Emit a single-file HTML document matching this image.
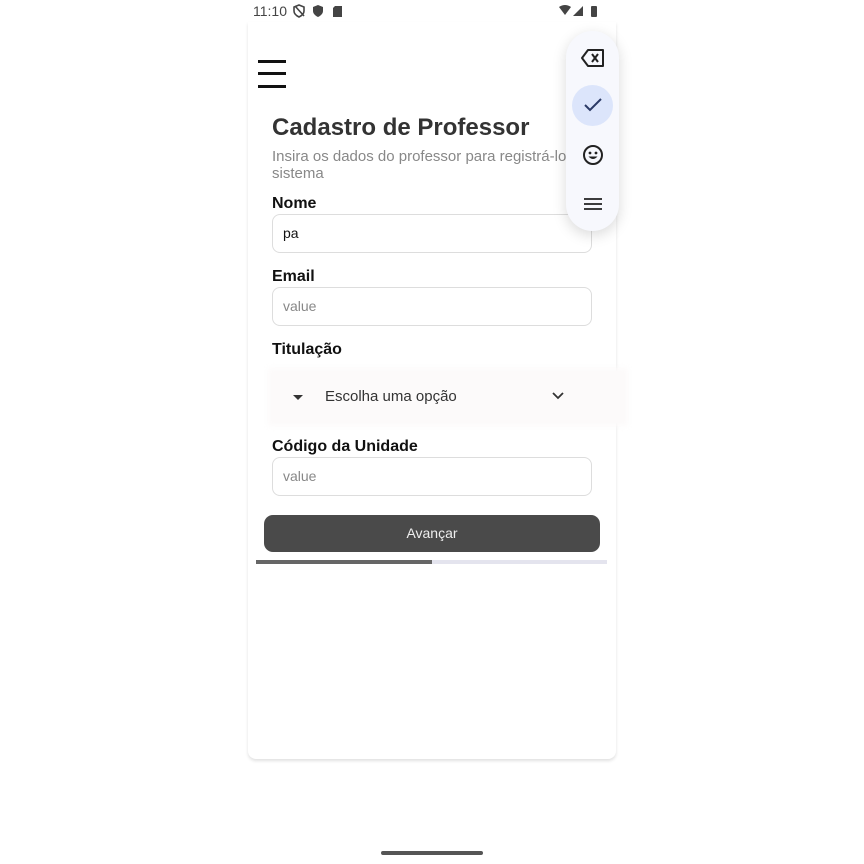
<!DOCTYPE html>
<html><head><meta charset="utf-8"><style>
*{margin:0;padding:0;box-sizing:border-box}
body{width:864px;height:864px;background:#fff;font-family:"Liberation Sans",sans-serif;position:relative;overflow:hidden}
.a{position:absolute}
.lbl{font-weight:bold;font-size:16px;color:#111;left:272px}
.inp{left:272px;width:320px;height:39px;border:1px solid #ddd;border-radius:8px;font-size:14px;padding-left:10px;line-height:37px}
</style></head><body>
<div class="a" style="left:253px;top:3px;font-size:14px;color:#444">11:10</div>
<svg class="a" style="left:293px;top:4px" width="60" height="14"><path d="M6 1 L11 3 V7 C11 10 8 12 6 13 C4 12 1 10 1 7 V3Z" fill="none" stroke="#444" stroke-width="1.6"/><path d="M2 2 L11 12" stroke="#444" stroke-width="1.6"/><path d="M25 1 L30 3 V7 C30 10 27 12 25 13 C23 12 20 10 20 7 V3Z" fill="#444"/><path d="M42 2 H49 V13 H40 V4Z" fill="#444"/></svg>
<svg class="a" style="left:558px;top:4px" width="44" height="14"><path d="M1 3 Q7 -1 13 3 L7 11Z" fill="#444"/><path d="M15 12 L25 2 V12Z" fill="#444"/><rect x="33" y="2" width="6" height="11" rx="1" fill="#444"/></svg>
<div class="a" style="left:248px;top:22px;width:368px;height:737px;box-shadow:0 2px 3px rgba(0,0,0,.12);border-radius:0 0 8px 8px"></div>
<div class="a" style="left:258px;top:60px;width:28px;height:3px;background:#111"></div>
<div class="a" style="left:258px;top:72px;width:28px;height:3px;background:#111"></div>
<div class="a" style="left:258px;top:85px;width:28px;height:3px;background:#111"></div>
<div class="a" style="left:272px;top:114px;font-size:24px;font-weight:bold;color:#333">Cadastro de Professor</div>
<div class="a" style="left:272px;top:148px;font-size:15px;color:#888;line-height:17px;width:300px;white-space:nowrap;overflow:hidden">Insira os dados do professor para registrá-lo n<br>sistema</div>
<div class="a lbl" style="top:195px">Nome</div>
<div class="a inp" style="top:214px;color:#111">pa</div>
<div class="a lbl" style="top:268px">Email</div>
<div class="a inp" style="top:287px;color:#888">value</div>
<div class="a lbl" style="top:341px">Titulação</div>
<div class="a" style="left:268px;top:368px;width:360px;height:58px;background:#fcfafa;filter:blur(3px)"></div>
<div class="a" style="left:293px;top:395px;width:0;height:0;border-left:5px solid transparent;border-right:5px solid transparent;border-top:5px solid #333"></div>
<div class="a" style="left:325px;top:388px;font-size:15px;color:#333">Escolha uma opção</div>
<svg class="a" style="left:551px;top:391px" width="14" height="10"><path d="M2 2 L7 7 L12 2" fill="none" stroke="#333" stroke-width="1.8"/></svg>
<div class="a lbl" style="top:438px">Código da Unidade</div>
<div class="a inp" style="top:457px;color:#888">value</div>
<div class="a" style="left:264px;top:515px;width:336px;height:37px;background:#4a4a4a;border-radius:9px;color:#eee;font-size:14px;text-align:center;line-height:37px">Avançar</div>
<div class="a" style="left:256px;top:560px;width:351px;height:4px;background:#e4e4ee"></div>
<div class="a" style="left:256px;top:560px;width:176px;height:4px;background:#666"></div>
<div class="a" style="left:566px;top:31px;width:53px;height:200px;background:#f7f8fd;border-radius:27px;box-shadow:0 4px 14px rgba(0,0,0,.15)"></div>
<svg class="a" style="left:580px;top:47px" width="26" height="22"><path d="M8 3 H23 V19 H8 L2 11Z" fill="none" stroke="#222" stroke-width="2" stroke-linejoin="round"/><path d="M12 7 L18 15 M18 7 L12 15" stroke="#222" stroke-width="2"/></svg>
<div class="a" style="left:572px;top:85px;width:41px;height:41px;border-radius:50%;background:#dce5fb"></div>
<svg class="a" style="left:583px;top:97px" width="20" height="16"><path d="M2 8 L7 13 L18 2" fill="none" stroke="#2b3a66" stroke-width="2"/></svg>
<svg class="a" style="left:582px;top:144px" width="22" height="22"><circle cx="11" cy="11" r="9" fill="none" stroke="#222" stroke-width="2"/><circle cx="8" cy="9" r="1.4" fill="#222"/><circle cx="14" cy="9" r="1.4" fill="#222"/><path d="M6.5 12.5 Q11 17.5 15.5 12.5Z" fill="#222"/></svg>
<svg class="a" style="left:583px;top:197px" width="20" height="14"><path d="M1 2 H19 M1 7 H19 M1 12 H19" stroke="#222" stroke-width="1.8"/></svg>
<div class="a" style="left:381px;top:851px;width:102px;height:4px;border-radius:2px;background:#555"></div>
</body></html>
